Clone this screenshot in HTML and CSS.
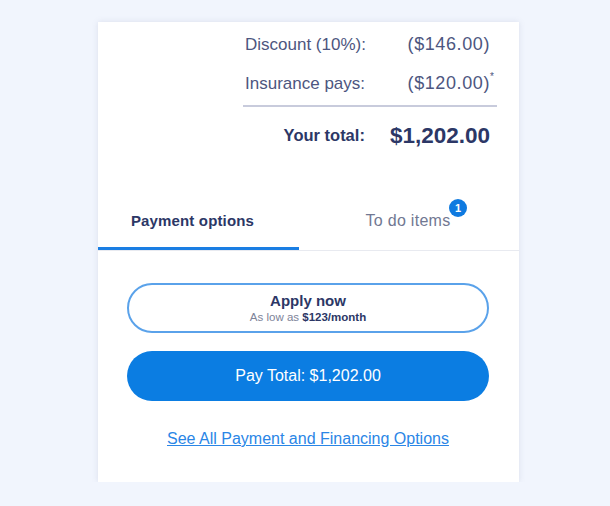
FILE: index.html
```html
<!DOCTYPE html>
<html lang="en">
<head>
<meta charset="UTF-8">
<meta name="viewport" content="width=device-width, initial-scale=1.0">
<title>Checkout</title>
<link rel="stylesheet" href="styles.css">
</head>
<body>
    <div class="card">
        <div class="summary">
            <div class="row">
                <span class="label">Discount (10%):</span>
                <span class="value">($146.00)</span>
            </div>
            <div class="row">
                <span class="label">Insurance pays:</span>
                <span class="value">($120.00)<sup>*</sup></span>
            </div>
            <div class="row total">
                <span class="label">Your total:</span>
                <span class="value">$1,202.00</span>
            </div>
        </div>

        <div class="tabs">
            <div class="tab active">Payment options</div>
            <div class="tab">To do items<span class="badge">1</span></div>
        </div>

        <div class="actions">
            <button class="btn btn-outline">
                <span class="btn-title">Apply now</span>
                <span class="btn-sub">As low as <b>$123/month</b></span>
            </button>
            <button class="btn btn-primary">Pay Total: $1,202.00</button>
            <a class="more" href="#">See All Payment and Financing Options</a>
        </div>
    </div>
</body>
</html>
```

FILE: styles.css
```css
body {
    font-family: "Liberation Sans", Arial, sans-serif;
    background-color: #f1f5fd;
    margin: 0;
    padding: 22px 0 0 98px;
}

.card {
    width: 421px;
    height: 460px;
    background-color: #fff;
    box-shadow: 0 0 6px rgba(120, 130, 160, 0.18);
    display: flex;
    flex-direction: column;
}

.summary {
    align-self: flex-end;
    width: 254px;
    margin: 0 22px 0 0;
    color: #4d5680;
}

.row {
    display: flex;
    justify-content: space-between;
    align-items: center;
    height: 39px;
    padding: 0 7px 0 2px;
}

.row:first-child {
    margin-top: 3px;
}

.row .label {
    font-size: 17px;
}

.row .value {
    font-size: 18px;
    letter-spacing: 0.6px;
    position: relative;
}

.row sup {
    position: absolute;
    left: 100%;
    top: -2px;
    font-size: 10px;
}

.row.total {
    border-top: 2px solid #c8cbdc;
    margin-top: 2px;
    height: 57px;
    justify-content: flex-end;
    gap: 25px;
    color: #2c3766;
}

.row.total .label {
    font-size: 16.5px;
    font-weight: bold;
}

.row.total .value {
    font-size: 22.5px;
    font-weight: bold;
    letter-spacing: 0;
}

.tabs {
    display: flex;
    margin-top: 27px;
    border-bottom: 1px solid #e8eaf0;
}

.tab {
    width: 201px;
    height: 59px;
    display: flex;
    align-items: center;
    justify-content: center;
    font-size: 16px;
    letter-spacing: 0.3px;
    color: #717892;
    position: relative;
}

.tab:last-child {
    flex: 1;
    padding-right: 2px;
}

.tab.active {
    color: #2c3766;
    font-size: 15px;
    letter-spacing: 0.15px;
    font-weight: bold;
    padding-right: 12px;
    box-sizing: border-box;
    box-shadow: inset 0 -3px 0 #1a7ee3;
}

.badge {
    position: absolute;
    top: 8px;
    right: 52px;
    width: 18px;
    height: 18px;
    border-radius: 50%;
    background-color: #0f7ae0;
    color: #fff;
    font-size: 11px;
    font-weight: bold;
    letter-spacing: 0;
    display: flex;
    align-items: center;
    justify-content: center;
}

.actions {
    display: flex;
    flex-direction: column;
    align-items: center;
    padding: 32px 30px 0 29px;
}

.btn {
    width: 100%;
    height: 50px;
    border-radius: 25px;
    font-family: inherit;
    cursor: pointer;
}

.btn-outline {
    background: #fff;
    border: 2px solid #5aa2ea;
    display: flex;
    flex-direction: column;
    align-items: center;
    justify-content: center;
    gap: 2px;
    padding-bottom: 2px;
}

.btn-title {
    font-size: 15px;
    font-weight: bold;
    color: #2c3766;
}

.btn-sub {
    font-size: 11.5px;
    color: #7d8399;
}

.btn-sub b {
    color: #2c3766;
}

.btn-primary {
    margin-top: 18px;
    border: none;
    background-color: #0b7de2;
    color: #fff;
    font-size: 16px;
}

.more {
    margin-top: 29px;
    font-size: 16px;
    color: #2a86e6;
}
```
